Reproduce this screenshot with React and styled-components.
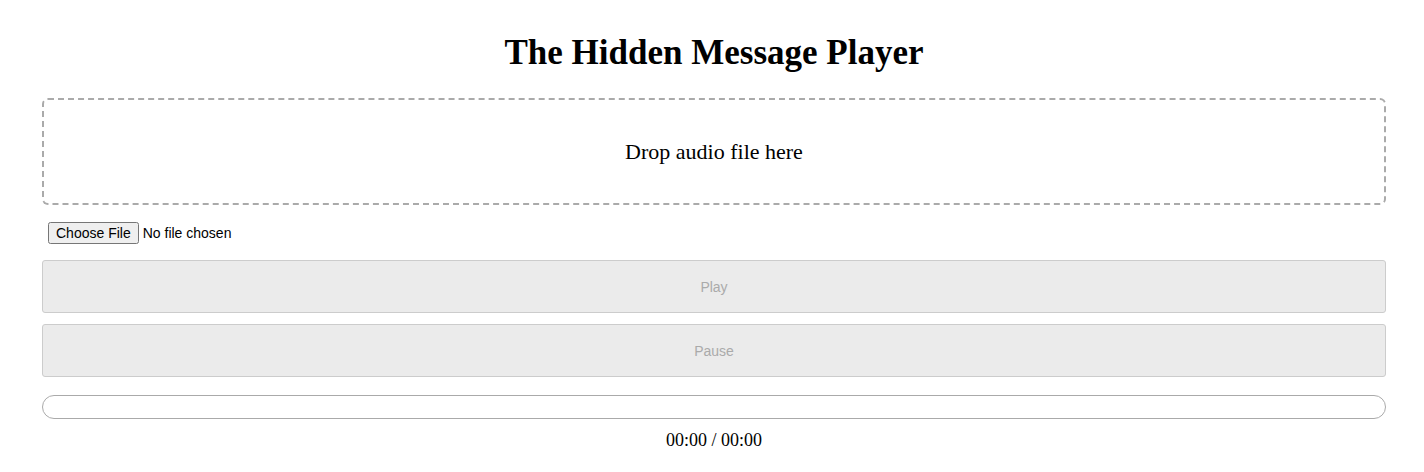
import React from 'react';
import styled, { createGlobalStyle } from 'styled-components';

const GlobalStyle = createGlobalStyle`
    body {
        margin: 0;
        font-family: 'Liberation Serif', 'Times New Roman', serif;
        background: #fff;
        color: #000;
    }
`;

const Page = styled.div`
    padding: 0 38px 0 42px;
`;

const Title = styled.h1`
    margin: 0;
    padding-top: 31px;
    font-size: 35px;
    line-height: 44px;
    font-weight: bold;
    text-align: center;
`;

const DropZone = styled.div`
    margin-top: 23px;
    height: 103px;
    border: 2px dashed #aaa;
    border-radius: 6px;
    display: flex;
    align-items: center;
    justify-content: center;
    font-size: 22px;
`;

const FileRow = styled.div`
    margin-top: 17px;
    padding-left: 6px;
    height: 22px;
    display: flex;
    align-items: center;
`;

const FileInput = styled.input`
    font-family: 'Liberation Sans', Arial, sans-serif;
    font-size: 14px;
`;

const ActionButton = styled.button`
    display: block;
    width: 100%;
    height: 53px;
    margin-top: ${p => p.$gap}px;
    background: #ebebeb;
    border: 1px solid #ccc;
    border-radius: 3px;
    color: #aaa;
    font-family: 'Liberation Sans', Arial, sans-serif;
    font-size: 14px;
`;

const Progress = styled.div`
    margin-top: 18px;
    height: 22px;
    border: 1px solid #aaa;
    border-radius: 12px;
`;

const Time = styled.div`
    margin-top: 11px;
    text-align: center;
    font-size: 18px;
`;

export default function App() {
    return (
        <>
            <GlobalStyle />
            <Page>
                <Title>The Hidden Message Player</Title>
                <DropZone>Drop audio file here</DropZone>
                <FileRow>
                    <FileInput type="file" accept="audio/*" />
                </FileRow>
                <ActionButton $gap={16} disabled>Play</ActionButton>
                <ActionButton $gap={11} disabled>Pause</ActionButton>
                <Progress />
                <Time>00:00 / 00:00</Time>
            </Page>
        </>
    );
}
